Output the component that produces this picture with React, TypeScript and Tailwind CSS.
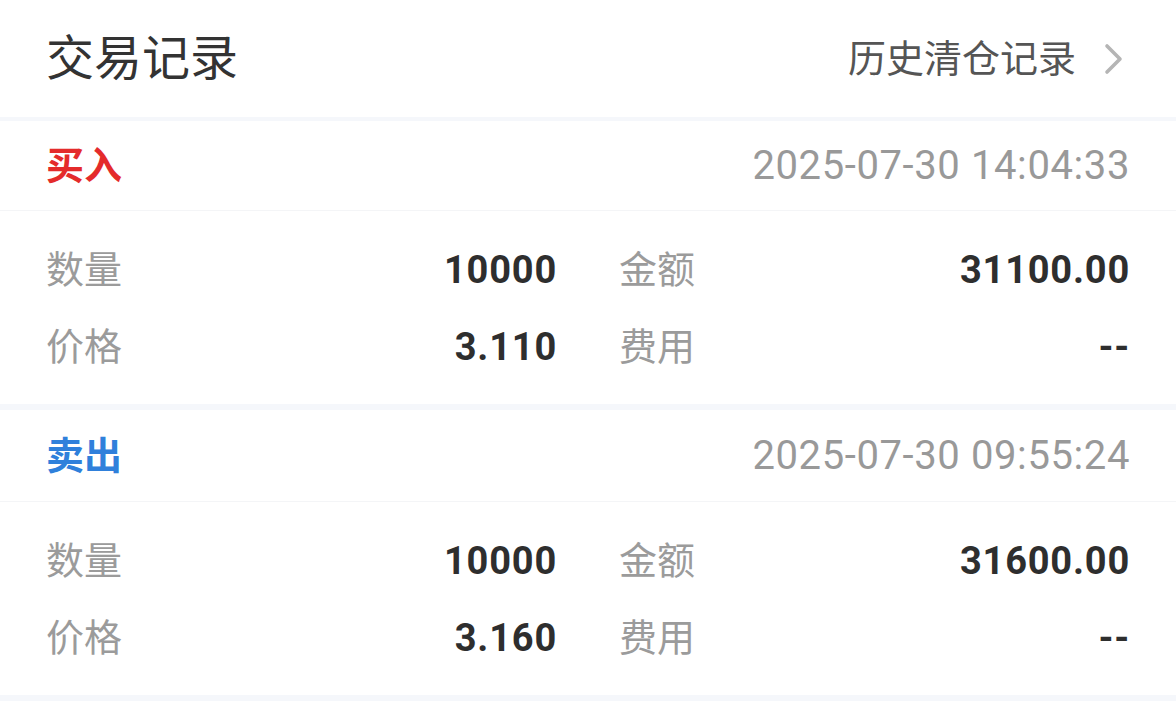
import React from "react";

const font = { fontFamily: '"Roboto", "Noto Sans CJK SC", sans-serif' };

type Trade = {
  side: string;
  color: string;
  time: string;
  qty: string;
  amount: string;
  price: string;
  fee: string;
};

const trades: Trade[] = [
  { side: "买入", color: "text-[#e42b2b]", time: "2025-07-30 14:04:33", qty: "10000", amount: "31100.00", price: "3.110", fee: "--" },
  { side: "卖出", color: "text-[#2f80db]", time: "2025-07-30 09:55:24", qty: "10000", amount: "31600.00", price: "3.160", fee: "--" },
];

function Cell({ label, value }: { label: string; value: string }) {
  return (
    <div className="flex items-center justify-between">
      <span className="text-[38px] leading-none text-[#9b9b9b]">{label}</span>
      <span className="text-[38px] leading-none font-bold text-[#2e2e2e] tracking-[0.8px]">{value}</span>
    </div>
  );
}

function TradeCard({ t, first }: { t: Trade; first: boolean }) {
  return (
    <div className={first ? "bg-white pb-[19px]" : "bg-white pb-[19px]"}>
      <div className={`${first ? "h-[90px]" : "h-[92px]"} px-[46px] flex items-center justify-between border-b border-[#f4f5f7]`}>
        <span className={`text-[38px] leading-none font-bold ${t.color}`}>{t.side}</span>
        <span className="text-[40px] leading-none text-[#999999] tracking-[0.6px]">{t.time}</span>
      </div>
      <div className="px-[46px] pt-[20px] grid grid-cols-2 gap-x-[62px]">
        <div className="h-[77px] flex flex-col justify-center"><Cell label="数量" value={t.qty} /></div>
        <div className="h-[77px] flex flex-col justify-center"><Cell label="金额" value={t.amount} /></div>
        <div className="h-[77px] flex flex-col justify-center"><Cell label="价格" value={t.price} /></div>
        <div className="h-[77px] flex flex-col justify-center"><Cell label="费用" value={t.fee} /></div>
      </div>
    </div>
  );
}

export default function App() {
  return (
    <div className="w-[1176px] h-[724px] bg-white overflow-hidden" style={font}>
      <div className="h-[117px] px-[46px] flex items-center justify-between">
        <span className="text-[48px] leading-none text-[#333333]">交易记录</span>
        <div className="flex items-center">
          <span className="text-[38px] leading-none text-[#555555]">历史清仓记录</span>
          <svg width="20" height="32" viewBox="0 0 20 32" className="ml-[28px] mr-[6px]">
            <path d="M3 3 L16 16 L3 29" fill="none" stroke="#b5b5b5" strokeWidth="3.6" strokeLinecap="round" strokeLinejoin="round" />
          </svg>
        </div>
      </div>
      <div className="h-[4px] bg-[#f5f7fb]" />
      <TradeCard t={trades[0]} first />
      <div className="h-[6px] bg-[#f5f7fb]" />
      <TradeCard t={trades[1]} first={false} />
      <div className="h-[6px] bg-[#f5f7fb]" />
    </div>
  );
}
